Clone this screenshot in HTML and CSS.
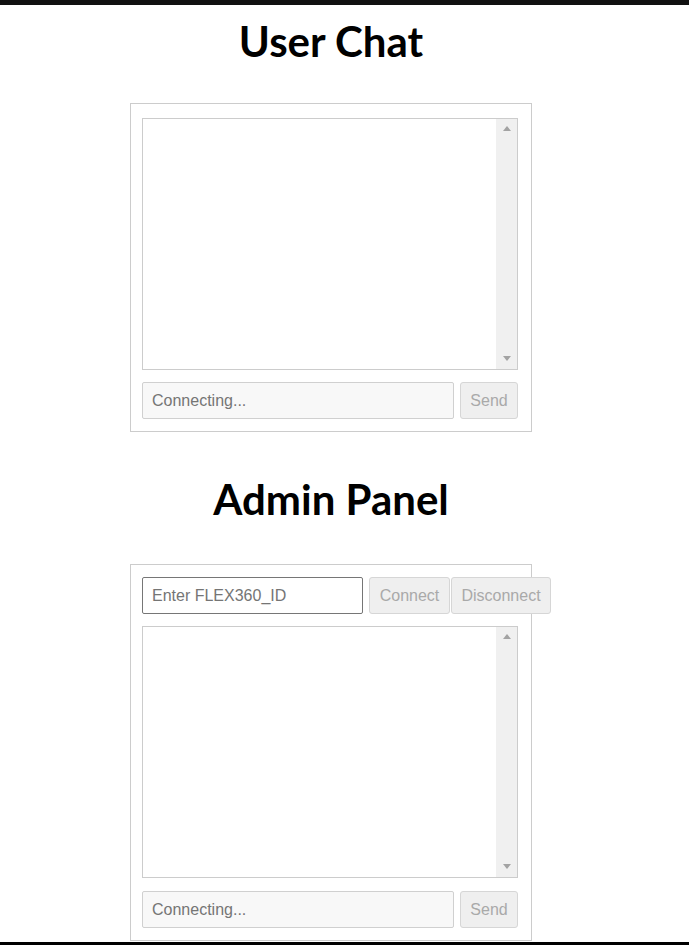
FILE: index.html
```html
<!DOCTYPE html>
<html lang="en">
<head>
<meta charset="utf-8">
<title>Chat</title>
<link rel="stylesheet" href="styles.css">
</head>
<body>
<div class="topbar"></div>
<main class="page">
  <h1 class="title">User Chat</h1>
  <section class="panel">
    <div class="messages">
      <div class="log"></div>
      <div class="scrollbar"><span class="arrow arrow-up"></span><span class="arrow arrow-down"></span></div>
    </div>
    <div class="row">
      <input class="field field-disabled" type="text" placeholder="Connecting..." disabled>
      <button class="btn btn-send" disabled>Send</button>
    </div>
  </section>

  <h1 class="title title-admin">Admin Panel</h1>
  <section class="panel panel-admin">
    <div class="row row-top">
      <input class="field field-id" type="text" placeholder="Enter FLEX360_ID">
      <button class="btn btn-connect" disabled>Connect</button>
      <button class="btn btn-disconnect" disabled>Disconnect</button>
    </div>
    <div class="messages">
      <div class="log"></div>
      <div class="scrollbar"><span class="arrow arrow-up"></span><span class="arrow arrow-down"></span></div>
    </div>
    <div class="row">
      <input class="field field-disabled" type="text" placeholder="Connecting..." disabled>
      <button class="btn btn-send" disabled>Send</button>
    </div>
  </section>
</main>
<div class="bottombar"></div>
</body>
</html>
```

FILE: styles.css
```css
html, body {
  margin: 0;
  padding: 0;
  background: #fff;
}
body {
  font-family: "Liberation Sans", Arial, sans-serif;
  width: 689px;
  overflow: hidden;
}
.topbar {
  height: 5px;
  background: #111;
}
.bottombar {
  height: 3px;
  margin-top: 1px;
  background: #000;
}
.page {
  width: 662px;
}
.title {
  margin: 0;
  text-align: center;
  font-family: "Lato", "Open Sans", sans-serif;
  font-weight: 700;
  font-size: 42px;
  line-height: 50px;
  padding-top: 11px;
  padding-bottom: 37px;
  color: #000;
}
.title-admin {
  padding-top: 42px;
  padding-bottom: 40px;
}
.panel {
  box-sizing: border-box;
  width: 402px;
  margin: 0 auto;
  border: 1px solid #ccc;
  padding: 14px 13px 12px 11px;
  display: flex;
  flex-direction: column;
  gap: 12px;
}
.panel-admin {
  padding-top: 12px;
}
.panel-admin .messages + .row {
  margin-top: 1px;
}
.messages {
  box-sizing: border-box;
  height: 252px;
  border: 1px solid #ccc;
  background: #fff;
  display: flex;
}
.log {
  flex: 1 1 auto;
}
.scrollbar {
  flex: 0 0 21px;
  background: #f0f0f0;
  display: flex;
  flex-direction: column;
  justify-content: space-between;
  align-items: center;
  padding: 7px 0 8px;
}
.arrow {
  width: 0;
  height: 0;
  border-left: 4.5px solid transparent;
  border-right: 4.5px solid transparent;
}
.arrow-up {
  border-bottom: 5px solid #a3a3a3;
}
.arrow-down {
  border-top: 5px solid #a3a3a3;
}
.row {
  display: flex;
  gap: 6px;
  height: 37px;
}
.row-top .field {
  flex: 0 0 221px;
}
.field {
  box-sizing: border-box;
  flex: 1 1 auto;
  min-width: 0;
  height: 37px;
  margin: 0;
  padding: 0 9px;
  font-family: "Liberation Sans", Arial, sans-serif;
  font-size: 16px;
  border-radius: 2px;
  outline: none;
}
.field::placeholder {
  color: #757575;
  opacity: 1;
}
.field-disabled {
  background: #f8f8f8;
  border: 1px solid #d0d0d0;
}
.field-id {
  background: #fff;
  border: 1px solid #767676;
}
.btn {
  box-sizing: border-box;
  flex: 0 0 auto;
  height: 37px;
  margin: 0;
  padding: 0;
  text-align: center;
  font-family: "Liberation Sans", Arial, sans-serif;
  font-size: 16px;
  color: #a9a9a9;
  background: #efefef;
  border: 1px solid #d6d6d6;
  border-radius: 3px;
}
.btn-send {
  width: 58px;
}
.btn-connect {
  width: 81px;
}
.btn-disconnect {
  width: 100px;
  margin-left: -5px;
}
```
